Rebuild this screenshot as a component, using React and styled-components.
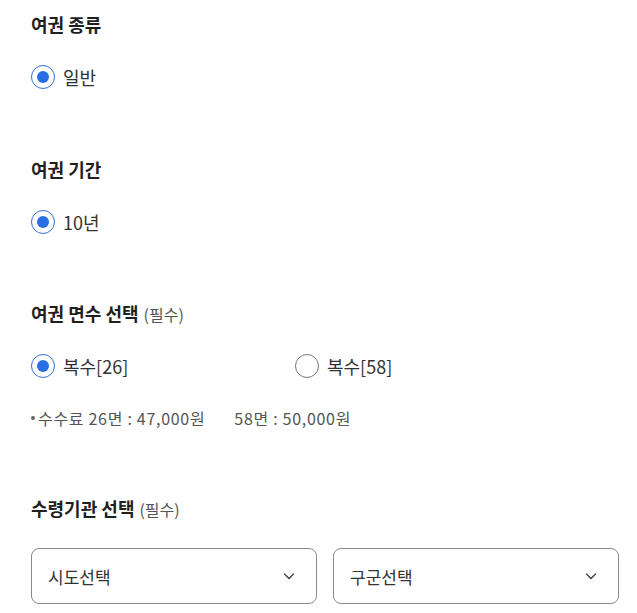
import React, { useState } from "react";
import styled, { createGlobalStyle } from "styled-components";

const GlobalStyle = createGlobalStyle`
  * { box-sizing: border-box; }
  body {
    margin: 0;
    background: #ffffff;
    font-family: "Noto Sans CJK KR", "Noto Sans", sans-serif;
    color: #222;
  }
`;

const Page = styled.div`
  width: 637px;
  padding: 12px 18px 0 31px;
`;

const Section = styled.section`
  margin-bottom: ${(p) => p.$gap ?? 68}px;
`;

const Heading = styled.h3`
  margin: 0 0 ${(p) => p.$gap ?? 29}px;
  font-size: 18px;
  line-height: 24px;
  font-weight: 700;
  color: #1f1f1f;
`;

const Required = styled.span`
  margin-left: 5px;
  font-size: 16px;
  font-weight: 400;
  color: #555;
`;

const RadioGroup = styled.div`
  display: grid;
  grid-template-columns: 264px 1fr;
  height: 24px;
`;

const RadioLabel = styled.label`
  display: flex;
  align-items: center;
  gap: 8px;
  font-size: 18px;
  line-height: 24px;
  color: #333;
  cursor: pointer;
`;

const RadioInput = styled.input.attrs({ type: "radio" })`
  appearance: none;
  margin: 0;
  width: 24px;
  height: 24px;
  flex: none;
  border-radius: 50%;
  border: 1.5px solid #777;
  background: #fff;
  display: grid;
  place-items: center;
  &:checked {
    border-color: #2f6fdc;
  }
  &:checked::after {
    content: "";
    width: 12px;
    height: 12px;
    border-radius: 50%;
    background: #2a6ee6;
  }
`;

const Note = styled.p`
  margin: 30px 0 0;
  display: flex;
  align-items: center;
  gap: 29px;
  font-size: 16px;
  line-height: 20px;
  letter-spacing: 0.7px;
  color: #555;
`;

const NoteItem = styled.span`
  display: inline-flex;
  align-items: center;
  gap: 3px;
`;

const Bullet = styled.span`
  width: 4px;
  height: 4px;
  border-radius: 50%;
  background: #666;
`;

const SelectRow = styled.div`
  display: grid;
  grid-template-columns: 1fr 1fr;
  gap: 16px;
  width: 588px;
`;

const SelectBox = styled.button`
  height: 56px;
  display: flex;
  align-items: center;
  justify-content: space-between;
  padding: 0 20px 0 16px;
  border: 1px solid #8a8a8a;
  border-radius: 8px;
  background: #fff;
  font-family: inherit;
  font-size: 17px;
  color: #333;
  cursor: pointer;
`;

const Chevron = () => (
  <svg width="14" height="14" viewBox="0 0 14 14" fill="none">
    <path d="M2.5 5l4.5 4.5L11.5 5" stroke="#444" strokeWidth="1.4" strokeLinecap="round" strokeLinejoin="round" />
  </svg>
);

export default function App() {
  const [pages, setPages] = useState("26");
  return (
    <>
      <GlobalStyle />
      <Page>
        <Section>
          <Heading>여권 종류</Heading>
          <RadioGroup>
            <RadioLabel>
              <RadioInput name="kind" defaultChecked />
              일반
            </RadioLabel>
          </RadioGroup>
        </Section>

        <Section $gap={67}>
          <Heading>여권 기간</Heading>
          <RadioGroup>
            <RadioLabel>
              <RadioInput name="term" defaultChecked />
              10년
            </RadioLabel>
          </RadioGroup>
        </Section>

        <Section $gap={68}>
          <Heading $gap={28}>
            여권 면수 선택<Required>(필수)</Required>
          </Heading>
          <RadioGroup>
            <RadioLabel>
              <RadioInput name="pages" checked={pages === "26"} onChange={() => setPages("26")} />
              복수[26]
            </RadioLabel>
            <RadioLabel>
              <RadioInput name="pages" checked={pages === "58"} onChange={() => setPages("58")} />
              복수[58]
            </RadioLabel>
          </RadioGroup>
          <Note>
            <NoteItem>
              <Bullet />
              수수료 26면 : 47,000원
            </NoteItem>
            <NoteItem>58면 : 50,000원</NoteItem>
          </Note>
        </Section>

        <Section $gap={0}>
          <Heading $gap={27}>
            수령기관 선택<Required>(필수)</Required>
          </Heading>
          <SelectRow>
            <SelectBox>
              시도선택
              <Chevron />
            </SelectBox>
            <SelectBox>
              구군선택
              <Chevron />
            </SelectBox>
          </SelectRow>
        </Section>
      </Page>
    </>
  );
}
